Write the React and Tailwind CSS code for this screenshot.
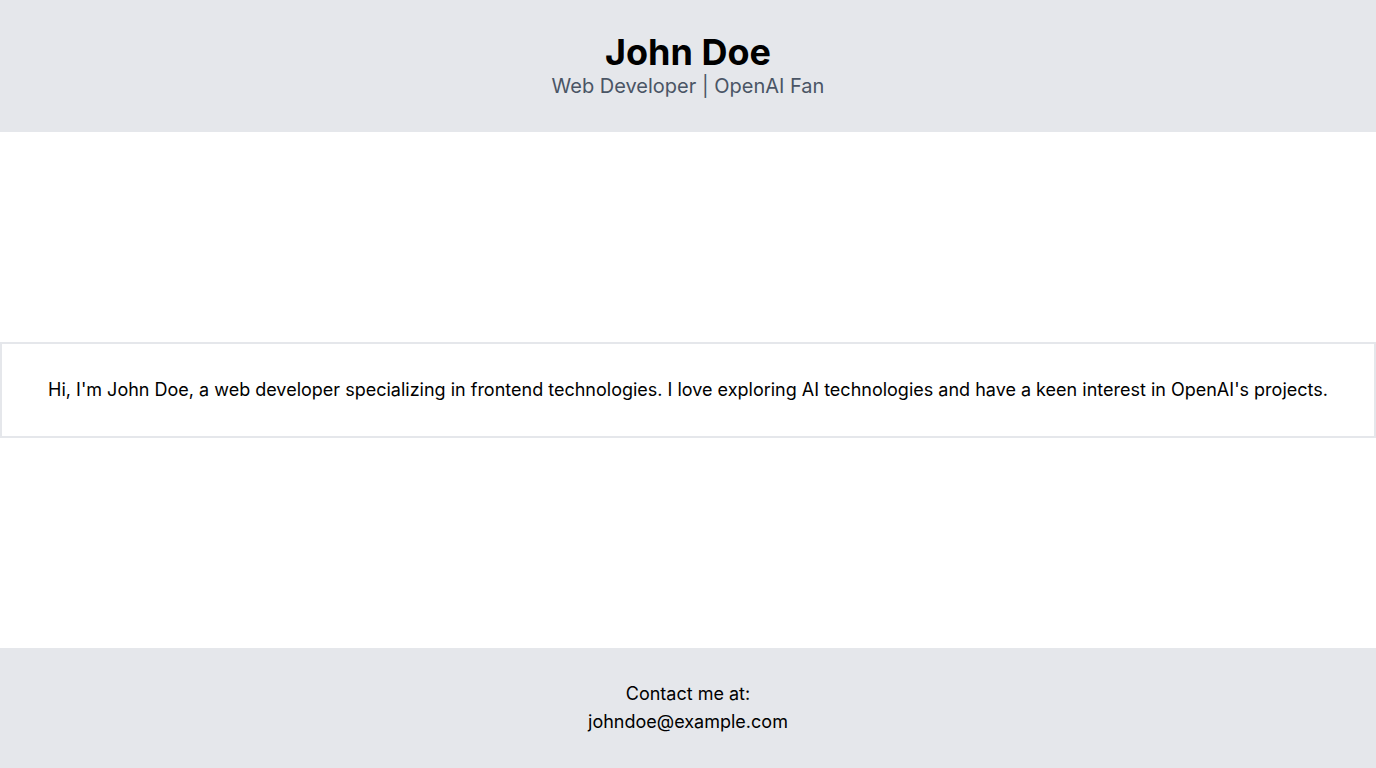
export default function App() {
  return (
    <div className="min-h-screen flex flex-col bg-white text-black" style={{ fontFamily: 'Inter, "Liberation Sans", sans-serif' }}>
      <header className="bg-gray-200 py-8 text-center">
        <h1 className="text-4xl font-bold">John Doe</h1>
        <p className="text-xl text-gray-600">Web Developer | OpenAI Fan</p>
      </header>

      <main className="flex-1 flex flex-col justify-center">
        <section className="border-2 border-gray-200 p-8 text-center">
          <p className="text-lg">
            Hi, I'm John Doe, a web developer specializing in frontend technologies. I love exploring AI technologies and have a keen interest in OpenAI's projects.
          </p>
        </section>
      </main>

      <footer className="bg-gray-200 py-8 text-center text-lg">
        <p>Contact me at:</p>
        <p>johndoe@example.com</p>
      </footer>
    </div>
  );
}
